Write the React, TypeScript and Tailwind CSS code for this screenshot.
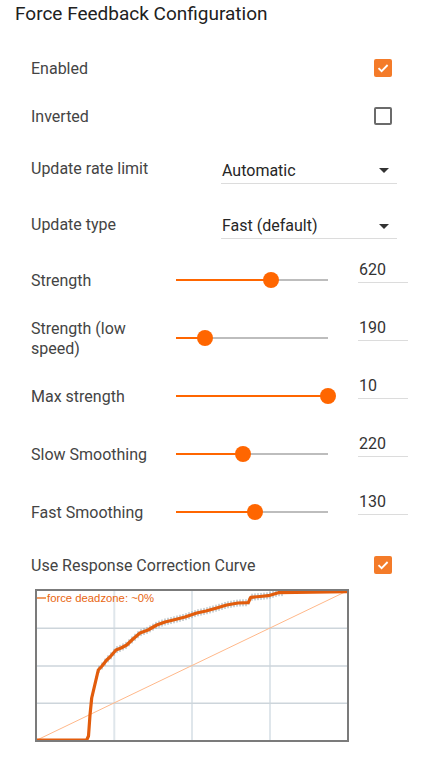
import React from 'react';

const ORANGE = '#ff6600';

// response curve, in chart svg coordinates (314 x 153)
const curve: [number, number][] = [
  [2, 151], [51.7, 151], [53.5, 147], [55, 126], [56.7, 109], [60, 95], [63.3, 81],
  [67, 77], [71.7, 71], [75, 68], [81, 61], [86, 59], [91.7, 56], [98, 50], [105, 44],
  [113, 41], [121.7, 36], [130, 33], [138.3, 31], [150, 28], [161.7, 24], [171, 22],
  [181.7, 19], [191.7, 16], [203, 14], [213.3, 13.7], [215.7, 8.3], [225, 7.5],
  [233.3, 6.7], [243.3, 3.7], [312, 2.7],
];

function yAt(x: number) {
  for (let i = 1; i < curve.length; i++) {
    const [x0, y0] = curve[i - 1];
    const [x1, y1] = curve[i];
    if (x >= x0 && x <= x1) return y0 + ((y1 - y0) * (x - x0)) / (x1 - x0 || 1);
  }
  return curve[curve.length - 1][1];
}

const ticks: number[] = [];
for (let x = 58; x < 248; x += 3) ticks.push(x);

function Checkbox({ checked }: { checked?: boolean }) {
  if (checked) {
    return (
      <div className="w-[18px] h-[18px] rounded-[2px] bg-[#f47b29] flex items-center justify-center">
        <svg width="14" height="14" viewBox="0 0 14 14">
          <path d="M2.5 7.2 L5.6 10.2 L11.6 4" fill="none" stroke="white" strokeWidth="1.8" />
        </svg>
      </div>
    );
  }
  return <div className="w-[18px] h-[18px] rounded-[2px] border-2 border-[#6b6b6b]" />;
}

function CheckRow({ label, checked }: { label: string; checked?: boolean }) {
  return (
    <div className="flex items-center h-[48px]">
      <span className="mt-[2px] text-[16px] leading-[24px] text-[#444]">{label}</span>
      <div className="ml-auto mr-[49px]">
        <Checkbox checked={checked} />
      </div>
    </div>
  );
}

function SelectRow({ label, value, h }: { label: string; value: string; h: string }) {
  return (
    <div className={`flex items-center ${h}`}>
      <span className="w-[190px] mt-[2px] text-[16px] leading-[24px] text-[#444]">{label}</span>
      <div className="w-[176px] mt-[6px] border-b border-[#dcdcdc] flex items-center justify-between pl-[1px] pr-[8px]">
        <span className="text-[16px] leading-[24px] text-[#262626]">{value}</span>
        <svg width="10" height="5" viewBox="0 0 10 5">
          <path d="M0 0 L10 0 L5 5 Z" fill="#333" />
        </svg>
      </div>
    </div>
  );
}

function SliderRow({ label, value, pct }: { label: string; value: string; pct: number }) {
  return (
    <div className="flex items-center h-[58px]">
      <span className="w-[125px] mr-[20px] mt-[2px] text-[16px] leading-[20px] text-[#444]">{label}</span>
      <div className="relative w-[152px] h-[16px]">
        <div className="absolute left-0 right-0 top-[7px] h-[2px] bg-[#bdbdbd]" />
        <div className="absolute left-0 top-[7px] h-[2px]" style={{ width: `${pct}%`, background: ORANGE }} />
        <div
          className="absolute top-0 w-[16px] h-[16px] rounded-full"
          style={{ left: `calc(${pct}% - 8px)`, background: ORANGE }}
        />
      </div>
      <div className="ml-[30px] w-[50px] mb-[20px] border-b border-[#dcdcdc] pl-[1px]">
        <span className="text-[16px] leading-[24px] text-[#333]">{value}</span>
      </div>
    </div>
  );
}

function Chart() {
  return (
    <svg width="314" height="153" viewBox="0 0 314 153" className="block">
      {/* grid */}
      {[79.3, 157, 235].map((x) => (
        <line key={x} x1={x} y1={2} x2={x} y2={151} stroke="#dfe6eb" strokeWidth="2" />
      ))}
      {[39.3, 77, 114.3].map((y) => (
        <line key={y} x1={2} y1={y} x2={312} y2={y} stroke="#cdd5db" strokeWidth="1.5" />
      ))}
      {/* identity */}
      <line x1={2} y1={151} x2={312} y2={2} stroke="#ffb88a" strokeWidth="1" />
      {/* jitter */}
      {ticks.map((x) => {
        const y = yAt(x);
        return <line key={x} x1={x} y1={y - 3.5} x2={x} y2={y + 3.5} stroke="#98a6ad" strokeWidth="1" />;
      })}
      <polyline
        points={curve.map((p) => p.join(',')).join(' ')}
        fill="none"
        stroke="#e25c0c"
        strokeWidth="3.2"
        strokeLinejoin="round"
      />
      {/* legend */}
      <line x1={2} y1={9} x2={11} y2={9} stroke="#e8650f" strokeWidth="1.3" />
      <text x={12} y={13} fontSize="11.3" fill="#e8650f" fontFamily="'Liberation Sans', Arial, sans-serif">
        force deadzone: ~0%
      </text>
      <rect x={1} y={1} width={312} height={151} fill="none" stroke="#7b7b7b" strokeWidth="2" />
    </svg>
  );
}

export default function App() {
  return (
    <div className="w-[441px] min-h-[759px] bg-white font-['Roboto',sans-serif]">
      <h1 className="pl-[15px] text-[19px] leading-[28px] text-[#212121] font-normal">
        Force Feedback Configuration
      </h1>
      <div className="pl-[31px] mt-[16px]">
        <CheckRow label="Enabled" checked />
        <CheckRow label="Inverted" />
        <SelectRow label="Update rate limit" value="Automatic" h="h-[56px]" />
        <SelectRow label="Update type" value="Fast (default)" h="h-[55px]" />
        <SliderRow label="Strength" value="620" pct={62.3} />
        <SliderRow label="Strength (low speed)" value="190" pct={19} />
        <SliderRow label="Max strength" value="10" pct={100} />
        <SliderRow label="Slow Smoothing" value="220" pct={44} />
        <SliderRow label="Fast Smoothing" value="130" pct={51.8} />
        <CheckRow label="Use Response Correction Curve" checked />
        <div className="ml-[4px]">
          <Chart />
        </div>
      </div>
    </div>
  );
}
